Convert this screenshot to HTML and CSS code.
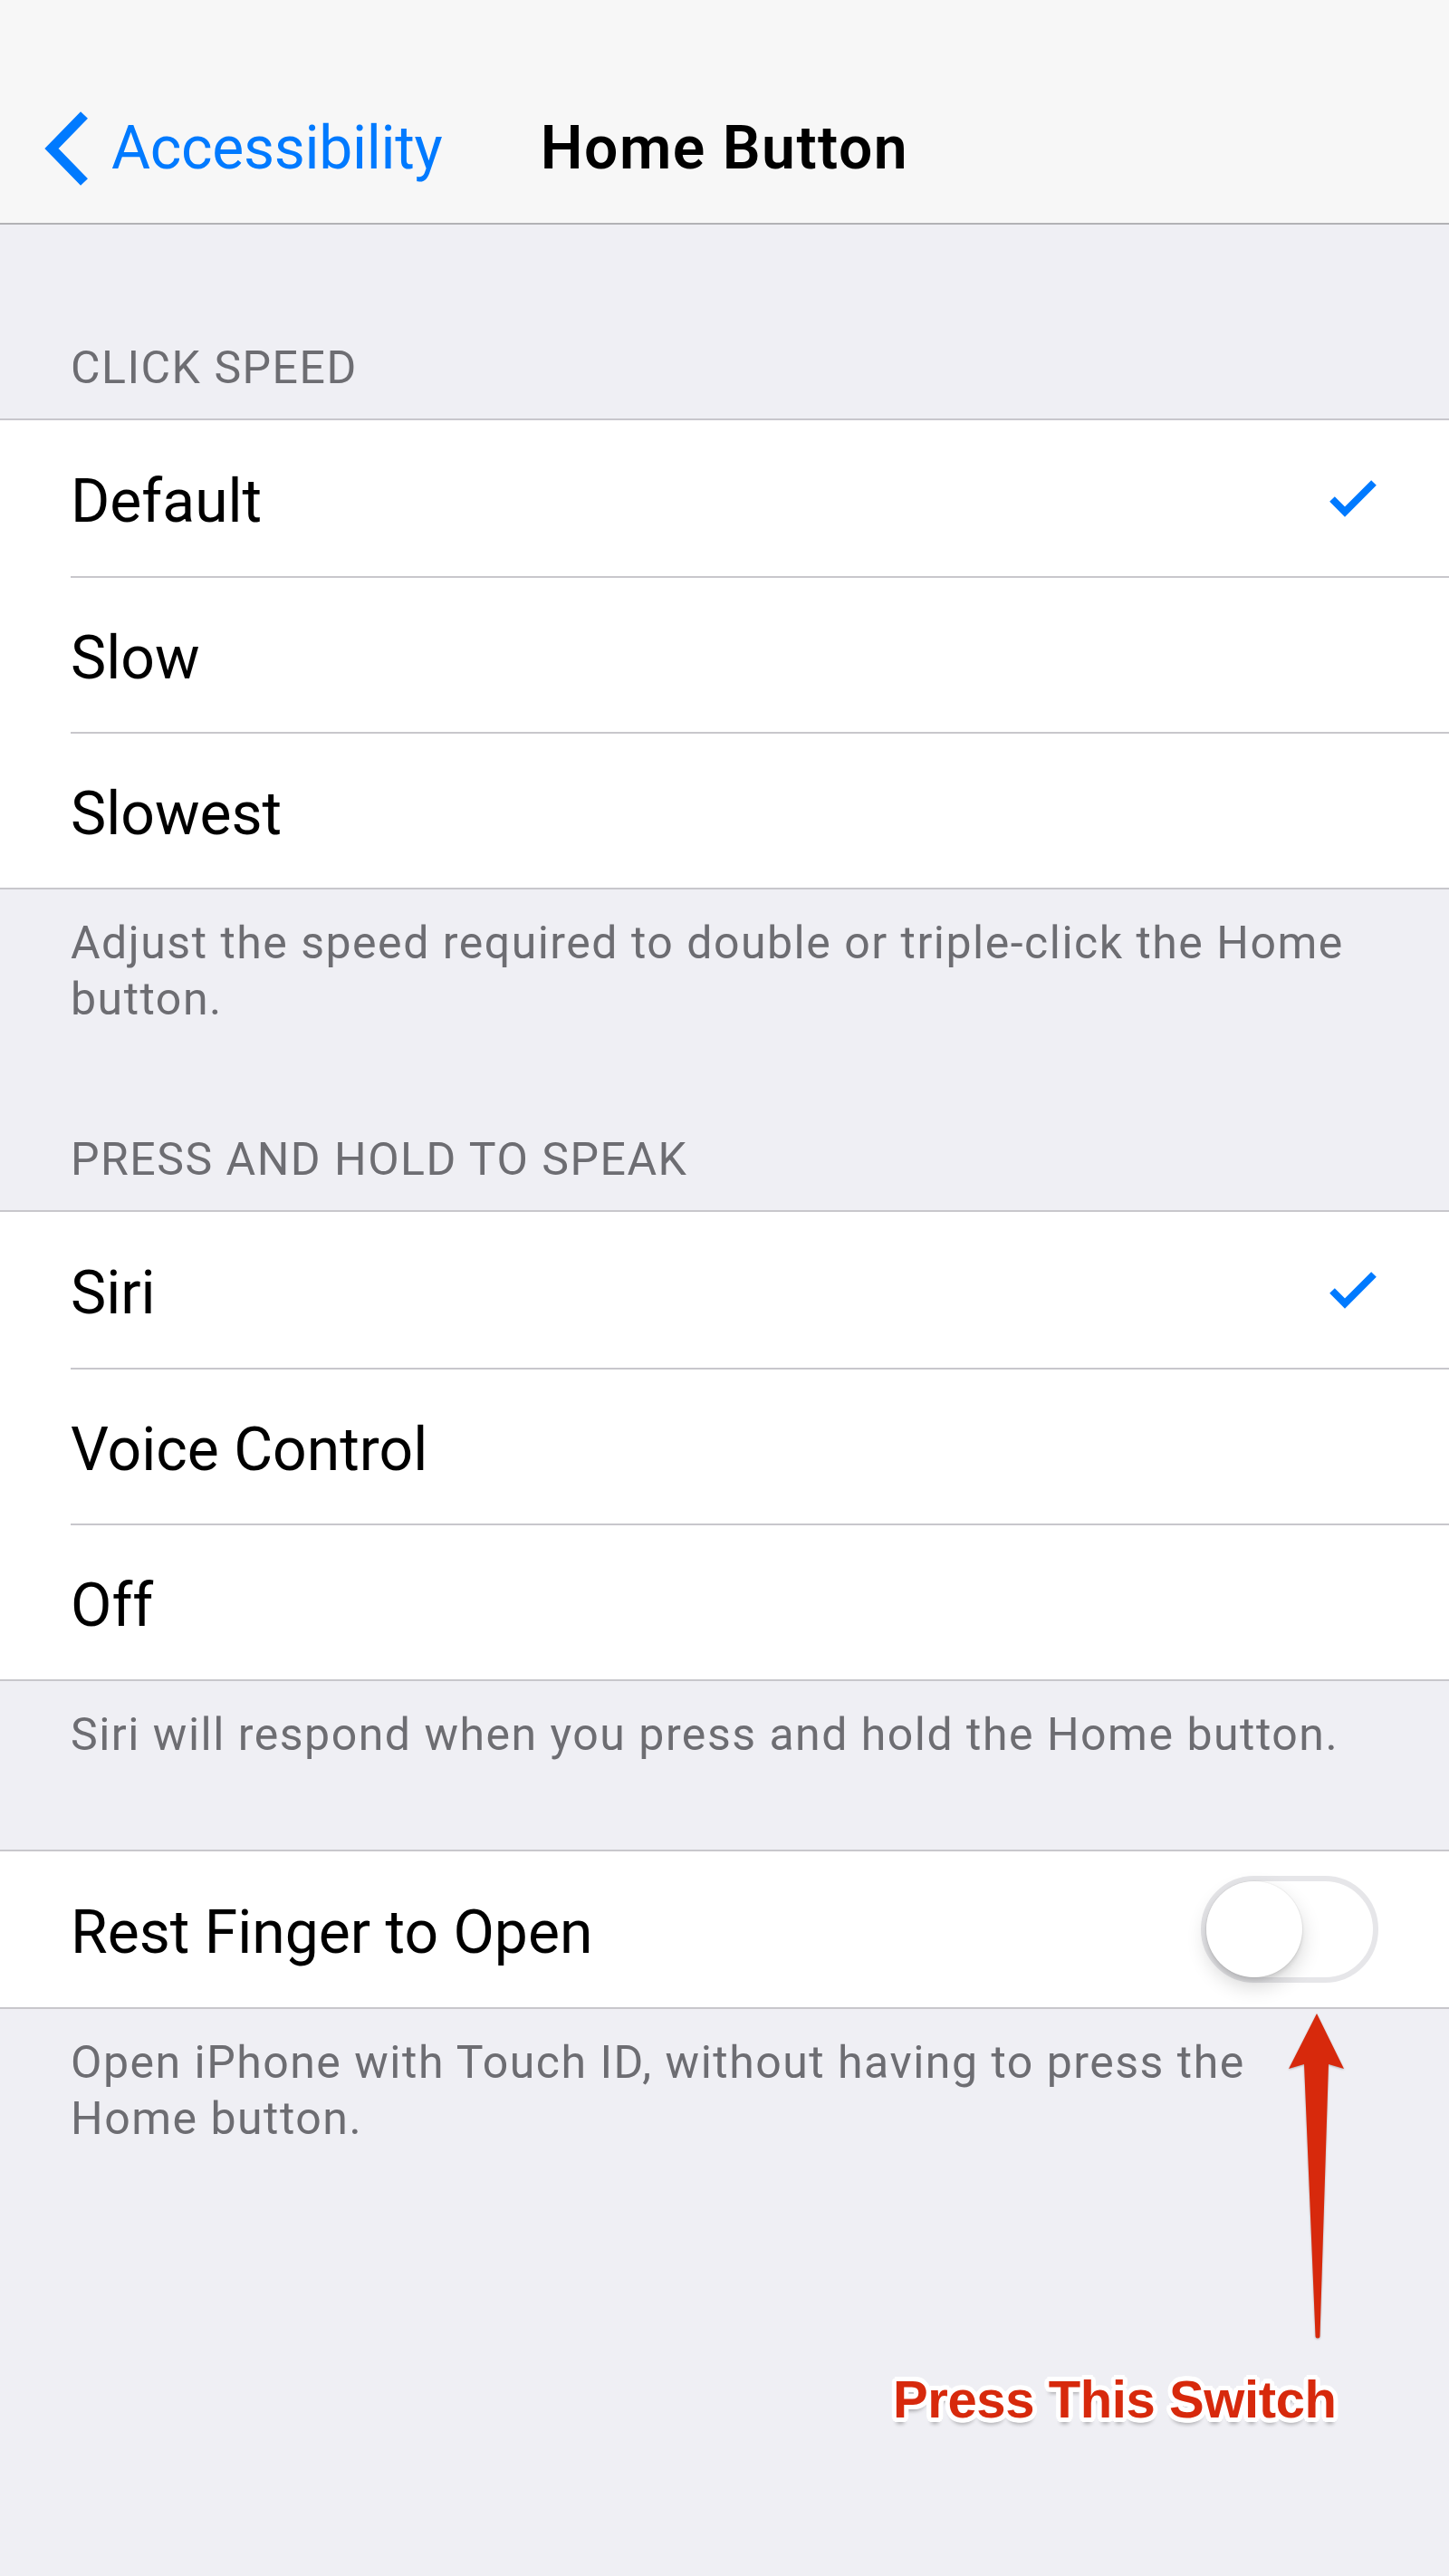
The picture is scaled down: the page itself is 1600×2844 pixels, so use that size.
FILE: index.html
```html
<!DOCTYPE html>
<html lang="en">
<head>
<meta charset="utf-8">
<title>Home Button</title>
<link rel="stylesheet" href="styles.css">
</head>
<body>
<div class="screen">
  <header class="navbar">
    <div class="status"></div>
    <div class="bar">
      <a class="back">
        <svg class="chevron" viewBox="0 0 50 82" aria-hidden="true"><polyline points="45,4 9,41 45,78" /></svg>
        <span>Accessibility</span>
      </a>
      <h1 class="title">Home Button</h1>
      <div class="bar-end"></div>
    </div>
  </header>

  <main class="content">
    <section class="group first">
      <h2 class="group-header">CLICK SPEED</h2>
      <ul class="list">
        <li class="row"><div class="row-inner"><span>Default</span><svg class="check" viewBox="0 0 52 42" aria-hidden="true"><polyline points="3,22 17,36 49,4" /></svg></div></li>
        <li class="row"><div class="row-inner"><span>Slow</span></div></li>
        <li class="row"><div class="row-inner"><span>Slowest</span></div></li>
      </ul>
      <p class="group-footer">Adjust the speed required to double or triple-click the Home button.</p>
    </section>

    <section class="group second">
      <h2 class="group-header">PRESS AND HOLD TO SPEAK</h2>
      <ul class="list">
        <li class="row"><div class="row-inner"><span>Siri</span><svg class="check" viewBox="0 0 52 42" aria-hidden="true"><polyline points="3,22 17,36 49,4" /></svg></div></li>
        <li class="row"><div class="row-inner"><span>Voice Control</span></div></li>
        <li class="row"><div class="row-inner"><span>Off</span></div></li>
      </ul>
      <p class="group-footer">Siri will respond when you press and hold the Home button.</p>
    </section>

    <section class="group third">
      <ul class="list">
        <li class="row"><div class="row-inner"><span>Rest Finger to Open</span><div class="switch"><div class="knob"></div></div></div></li>
      </ul>
      <p class="group-footer">Open iPhone with Touch ID, without having to press the Home button.</p>
    </section>
  </main>

  <!-- callout drawn on top of the settings list -->
  <svg class="callout-arrow" viewBox="0 0 70 370" aria-hidden="true">
    <path d="M34 5 L64 66 L47 61 L37.5 361 A2.5 2.5 0 0 1 32.5 361 L20 61 L3 66 Z" />
  </svg>
  <div class="callout-label">Press This Switch</div>
</div>
</body>
</html>
```
FILE: styles.css
```css
html, body {
  margin: 0;
  padding: 0;
  background: #efeff4;
}

body {
  font-family: Roboto, "Liberation Sans", Arial, sans-serif;
  color: #000;
}

.screen {
  position: relative;
  width: 1600px;
  min-height: 2844px;
  overflow: hidden;
}

/* navigation bar */
.navbar {
  background: #f7f7f7;
  border-bottom: 2px solid #b2b2b5;
}

.status {
  height: 77px;
}

.bar {
  height: 169px;
  box-sizing: border-box;
  padding-top: 4px;
  display: grid;
  grid-template-columns: 1fr auto 1fr;
  align-items: center;
}

.back {
  display: flex;
  align-items: center;
  gap: 25px;
  padding-left: 48px;
  color: #007aff;
  font-size: 66px;
  line-height: 80px;
  letter-spacing: -0.3px;
}

.chevron {
  width: 50px;
  height: 82px;
  flex: none;
}

.chevron polyline {
  fill: none;
  stroke: #007aff;
  stroke-width: 11;
  stroke-linejoin: miter;
  stroke-linecap: butt;
}

.title {
  margin: 0;
  font-size: 66px;
  line-height: 80px;
  font-weight: 600;
  letter-spacing: 1.5px;
}

/* grouped table */
.group-header {
  margin: 0;
  padding: 0 78px 26px;
  font-size: 50px;
  line-height: 60px;
  font-weight: 400;
  letter-spacing: 1.5px;
  color: #6d6d72;
}

.first .group-header {
  padding-top: 128px;
}

.second .group-header {
  padding-top: 116px;
}

.third .list {
  margin-top: 96px;
}

.list {
  margin: 0;
  padding: 0;
  list-style: none;
  background: #fff;
  border-top: 2px solid #c8c7cc;
  border-bottom: 2px solid #c8c7cc;
}

.row {
  padding-left: 78px;
}

.row-inner {
  height: 172px;
  box-sizing: border-box;
  padding: 8px 78px 0 0;
  display: flex;
  align-items: center;
  justify-content: space-between;
  font-size: 66px;
  line-height: 80px;
}

.row + .row .row-inner {
  border-top: 2px solid #c8c7cc;
}

.check {
  width: 52px;
  height: 42px;
  margin: -8px 2px 0 0;
  flex: none;
}

.check polyline {
  fill: none;
  stroke: #007aff;
  stroke-width: 8;
  stroke-linejoin: miter;
  stroke-linecap: butt;
}

.group-footer {
  margin: 0;
  padding: 28px 110px 0 78px;
  font-size: 50px;
  line-height: 62px;
  letter-spacing: 1.5px;
  color: #6d6d72;
}

/* toggle, off state */
.switch {
  width: 196px;
  height: 118px;
  box-sizing: border-box;
  margin-top: -8px;
  border: 6px solid #e6e6e9;
  border-radius: 59px;
  background: #fff;
  display: flex;
  align-items: center;
  flex: none;
}

.knob {
  width: 106px;
  height: 106px;
  border-radius: 50%;
  background: #fff;
  box-shadow: 0 10px 22px rgba(0, 0, 0, 0.16), 0 4px 4px rgba(0, 0, 0, 0.08), 0 0 0 1px rgba(0, 0, 0, 0.04);
}

/* red callout */
.callout-arrow {
  position: absolute;
  left: 1420px;
  top: 2218px;
  width: 70px;
  height: 370px;
  filter: drop-shadow(0 1px 1px rgba(0, 0, 0, 0.25));
}

.callout-arrow path {
  fill: #d7290c;
}

.callout-label {
  position: absolute;
  left: 986px;
  top: 2620px;
  font-family: "Liberation Sans", Arial, sans-serif;
  font-weight: 700;
  font-size: 58px;
  line-height: 58px;
  letter-spacing: -0.4px;
  white-space: nowrap;
  color: #d7290c;
  text-shadow:
    5px 0 0 #fff, -5px 0 0 #fff, 0 5px 0 #fff, 0 -5px 0 #fff,
    3.5px 3.5px 0 #fff, -3.5px 3.5px 0 #fff, 3.5px -3.5px 0 #fff, -3.5px -3.5px 0 #fff,
    4.6px 1.9px 0 #fff, -4.6px 1.9px 0 #fff, 4.6px -1.9px 0 #fff, -4.6px -1.9px 0 #fff,
    1.9px 4.6px 0 #fff, -1.9px 4.6px 0 #fff, 1.9px -4.6px 0 #fff, -1.9px -4.6px 0 #fff,
    0 7px 4px rgba(0, 0, 0, 0.3);
}
```
